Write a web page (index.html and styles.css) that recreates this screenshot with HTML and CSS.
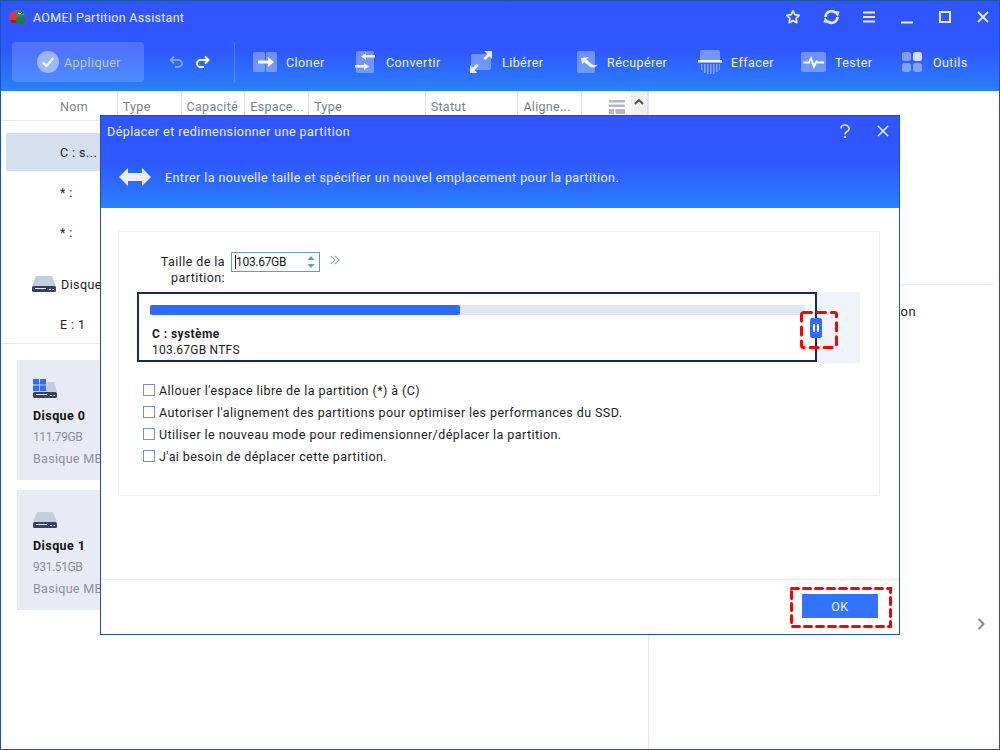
FILE: index.html
```html
<!DOCTYPE html>
<html lang="fr">
<head>
<meta charset="utf-8">
<title>AOMEI Partition Assistant</title>
<link rel="stylesheet" href="styles.css">
</head>
<body>
<div class="app">
  <header class="topbar">
    <div class="titlebar">
      <svg class="logo" width="19" height="16" viewBox="0 0 19 16"><path d="M1 8a8 7.500 0 0 1 8-7l1 6-2 2v3H2z" fill="#d63a3a"/><path d="M8 1a8 7 0 0 1 9 5l-4 2-5-1z" fill="#2f8f5a"/><path d="M8 9h10a8 7 0 0 1-3 6H8z" fill="#1f7a45"/><path d="M2 11h6v3H4z" fill="#8e2233"/><path d="M10 4l2 1 2-2" stroke="#bfe8c8" fill="none"/></svg>
      <span class="apptitle">AOMEI Partition Assistant</span>
      <div class="winctl">
        <svg width="16" height="16" viewBox="0 0 16 16"><path d="M8 1.800l1.900 3.900 4.300.6-3.100 3 .7 4.300L8 11.600l-3.800 2 .7-4.300-3.100-3 4.300-.6z" fill="none" stroke="#e6ecff" stroke-width="1.800" stroke-linejoin="round"/></svg>
        <svg width="17" height="16" viewBox="0 0 17 16"><path d="M2.500 8a6 6 0 0 1 10-4.300M14.500 8a6 6 0 0 1-10 4.300" fill="none" stroke="#e6ecff" stroke-width="2.600"/><path d="M10.500 2l6 .5-1.500 5.500zM6.500 14l-6-.5L2 8z" fill="#e6ecff"/></svg>
        <svg width="14" height="14" viewBox="0 0 14 14"><path d="M1 2.500h12M1 7h12M1 11.500h12" stroke="#e6ecff" stroke-width="2"/></svg>
        <svg class="minicon" width="14" height="14" viewBox="0 0 14 14"><path d="M1 12.500h12" stroke="#e6ecff" stroke-width="2"/></svg>
        <svg width="14" height="14" viewBox="0 0 14 14"><rect x="2" y="2" width="10" height="10" fill="none" stroke="#e6ecff" stroke-width="2"/></svg>
        <svg width="14" height="14" viewBox="0 0 14 14"><path d="M2 2l10 10M12 2L2 12" stroke="#e6ecff" stroke-width="1.800"/></svg>
      </div>
    </div>
    <div class="toolbar">
      <div class="apply">
        <svg width="22" height="22" viewBox="0 0 22 22"><circle cx="11" cy="11" r="11" fill="#fff" opacity=".45"/><path d="M6 11.500l3.500 3.500 7-8" fill="none" stroke="#fff" stroke-width="2.500" opacity=".85"/></svg>
        <span>Appliquer</span>
      </div>
      <div class="history">
        <svg width="16" height="14" viewBox="0 0 16 14"><path d="M5 1.500L1.500 5 5 8.500M2 5h7.500a3.500 3.500 0 0 1 0 7H6" fill="none" stroke="#7fa6ff" stroke-width="1.800"/></svg>
        <svg width="16" height="14" viewBox="0 0 16 14"><path d="M11 1.500L14.500 5 11 8.500M14 5H6.500a3.500 3.500 0 0 0 0 7H10" fill="none" stroke="#fff" stroke-width="2"/></svg>
      </div>
      <div class="sep"></div>
      <div class="tools">
        <div class="tool">
          <svg width="33" height="26" viewBox="0 0 33 26"><rect x="0" y="3" width="12" height="20" rx="1.500" fill="#fff" opacity=".32"/><rect x="13" y="3" width="11" height="20" rx="1.500" fill="#fff" opacity=".32"/><path d="M5 11.500h10V8l6 5-6 5v-3.500H5z" fill="#fff"/></svg>
          <span>Cloner</span>
        </div>
        <div class="tool">
          <svg width="31" height="26" viewBox="0 0 31 26"><rect x="1" y="2" width="18" height="22" rx="2" fill="#fff" opacity=".32"/><path d="M20 6h-9V4l-5 3.500L11 11V8.500h9zM0 16h9v-2l5 3.500L9 21v-2.500H0z" fill="#fff" opacity=".95"/></svg>
          <span>Convertir</span>
        </div>
        <div class="tool">
          <svg width="32" height="26" viewBox="0 0 32 26"><rect x="1" y="5" width="20" height="16" rx="2" fill="#fff" opacity=".32"/><path d="M22 2v8l-2.700-2.700-4 4-2-2 4-4L14.500 2zM0 24v-8l2.700 2.700 4-4 2 2-4 4L7.500 24z" fill="#e6edff"/></svg>
          <span>Libérer</span>
        </div>
        <div class="tool">
          <svg width="30" height="26" viewBox="0 0 30 26"><rect x="0" y="2" width="18" height="22" rx="2" fill="#fff" opacity=".32"/><path d="M4 9l8-1-2.500 2.500 5 4.500c2 1.500 4 1.500 6 .5-1 3-5 4-8 2l-5-4.500L5 15z" fill="#f2f5ff"/></svg>
          <span>Récupérer</span>
        </div>
        <div class="tool">
          <svg width="33" height="26" viewBox="0 0 33 26"><rect x="2" y="1" width="20" height="11" rx="2" fill="#fff" opacity=".35"/><rect x="0" y="11" width="24" height="2.500" fill="#fff"/><path d="M3 15h1.500v6H3zM6 15h1.500v9H6zM9 15h1.500v10H9zM12 15h1.500v10H12zM15 15h1.500v10H15zM18 15h1.500v8H18zM21 15h1v6h-1z" fill="#fff" opacity=".4"/></svg>
          <span>Effacer</span>
        </div>
        <div class="tool">
          <svg width="34" height="26" viewBox="0 0 34 26"><rect x="0" y="3" width="25" height="20" rx="2" fill="#fff" opacity=".32"/><path d="M2.500 13.500H8l2-4 3 8 2.500-5 1.500 1h6" fill="none" stroke="#fff" stroke-width="2"/></svg>
          <span>Tester</span>
        </div>
        <div class="tool">
          <svg width="31" height="26" viewBox="0 0 31 26"><rect x="0" y="3" width="9" height="9" rx="2.500" fill="#fff" opacity=".4"/><rect x="11" y="3" width="9" height="9" rx="2.500" fill="#fff" opacity=".8"/><rect x="0" y="14" width="9" height="9" rx="2.500" fill="#fff" opacity=".4"/><rect x="11" y="14" width="9" height="9" rx="2.500" fill="#fff" opacity=".4"/></svg>
          <span>Outils</span>
        </div>
      </div>
    </div>
  </header>
  <main class="content">
    <section class="leftpane">
      <div class="thead">
        <span class="th th-name">Nom</span>
        <span class="th th-a">Type</span>
        <span class="th th-a">Capacité</span>
        <span class="th th-a">Espace...</span>
        <span class="th th-b">Type</span>
        <span class="th th-c">Statut</span>
        <span class="th th-a">Aligne...</span>
        <span class="th th-icon"><svg width="16" height="14" viewBox="0 0 16 14"><path d="M0 0h16v2.500H0zM0 4.500h16V7H0zM0 9h5v5H0zM6.500 9H16v5H6.500z" fill="#aeb8c9"/></svg></span>
        <span class="th-scroll"><svg width="10" height="7" viewBox="0 0 10 7"><path d="M1 6l4-4 4 4" fill="none" stroke="#555" stroke-width="2"/></svg></span>
      </div>
      <div class="rows">
        <div class="row selected">C : s...</div>
        <div class="row">* :</div>
        <div class="row">* :</div>
        <div class="row diskrow">
          <svg width="24" height="18" viewBox="0 0 24 18"><path d="M4 1h16l4 11H0z" fill="#c3cddd"/><rect x="0" y="11" width="24" height="6" rx="1.500" fill="#39415c"/><path d="M3 13.500h11M17 14.500h2M20.500 14.500h1.500" stroke="#e8ecf4"/></svg>
          <span>Disque</span>
        </div>
        <div class="row">E : 1</div>
      </div>
      <div class="cards">
        <div class="card">
          <svg width="24" height="20" viewBox="0 0 24 20"><path d="M6 3h15l3 10H0z" fill="#c3cddd"/><rect x="0" y="13" width="24" height="6" rx="1.500" fill="#39415c"/><path d="M3 15.500h11M17 16.500h2M20.500 16.500h1.500" stroke="#e8ecf4"/><path d="M0 0h6v5.500H0zM7 0h6v5.500H7zM0 6.500h6V12H0zM7 6.500h6V12H7z" fill="#2f6bff"/></svg>
          <strong>Disque 0</strong>
          <span class="cardsize">111.79GB</span>
          <span>Basique MBR</span>
        </div>
        <div class="card">
          <svg width="24" height="20" viewBox="0 0 24 20"><path d="M4 3h16l4 10H0z" fill="#c3cddd"/><rect x="0" y="13" width="24" height="6" rx="1.500" fill="#39415c"/><path d="M3 15.500h11M17 16.500h2M20.500 16.500h1.500" stroke="#e8ecf4"/></svg>
          <strong>Disque 1</strong>
          <span class="cardsize">931.51GB</span>
          <span>Basique MBR</span>
        </div>
      </div>
    </section>
    <aside class="rightpane">
      <div class="opline"></div>
      <div class="opitem">Partition</div>
      <svg class="chev" width="8" height="12" viewBox="0 0 8 12"><path d="M1.500 1l5 5-5 5" fill="none" stroke="#7d8494" stroke-width="2"/></svg>
    </aside>
  </main>

  <div class="dialog">
    <div class="dlghead">
      <div class="dlgtitle">
        <span>Déplacer et redimensionner une partition</span>
        <svg class="dlgq" width="12" height="14" viewBox="0 0 12 14"><path d="M2 4.500a4 3.500 0 1 1 6 3c-1.500 1-2 1.500-2 3" fill="none" stroke="#e6ecff" stroke-width="1.600"/><path d="M5 12h2v2H5z" fill="#e6ecff"/></svg>
        <svg class="dlgx" width="12" height="12" viewBox="0 0 12 12"><path d="M1 1l10 10M11 1L1 11" stroke="#e6ecff" stroke-width="1.600"/></svg>
      </div>
      <div class="dlgsub">
        <svg width="32" height="18" viewBox="0 0 32 18"><path d="M0 9l9-9v5h14V0l9 9-9 9v-5H9v5z" fill="#eaf0ff"/></svg>
        <span>Entrer la nouvelle taille et spécifier un nouvel emplacement pour la partition.</span>
      </div>
    </div>
    <div class="dlgbody">
      <div class="panel">
        <div class="sizerow">
          <label class="sizelabel">Taille de la partition:</label>
          <div class="sizeinput">
            <span class="caret"></span><span class="sizeval">103.67GB</span>
            <svg width="8" height="14" viewBox="0 0 8 14"><path d="M4 1l3.500 4h-7zM4 13L.5 9h7z" fill="#6f93cf"/></svg>
          </div>
          <svg class="more" width="10" height="10" viewBox="0 0 10 10"><path d="M1 1l4 4-4 4M5 1l4 4-4 4" fill="none" stroke="#8fa4d0" stroke-width="1.100"/></svg>
        </div>
        <div class="slider">
          <div class="partbox">
            <div class="track"><div class="fill"></div></div>
            <div class="pname">C : système</div>
            <div class="pinfo">103.67GB NTFS</div>
            <div class="handle"><i></i><i></i></div>
          </div>
          <div class="freezone"></div>
        </div>
        <ul class="options">
          <li><span class="box"></span>Allouer l'espace libre de la partition (*) à (C)</li>
          <li><span class="box"></span>Autoriser l'alignement des partitions pour optimiser les performances du SSD.</li>
          <li><span class="box"></span>Utiliser le nouveau mode pour redimensionner/déplacer la partition.</li>
          <li><span class="box"></span>J'ai besoin de déplacer cette partition.</li>
        </ul>
      </div>
    </div>
    <div class="dlgfoot"><button class="ok">OK</button></div>
  </div>
  <svg class="mark mark-handle" width="38" height="38" viewBox="0 0 38 38"><rect x="1.500" y="1.500" width="35" height="35" rx="2" fill="none" stroke="#f00" stroke-width="3" stroke-dasharray="8 6" stroke-linecap="round"/></svg>
  <svg class="mark mark-ok" width="102" height="41" viewBox="0 0 102 41"><rect x="1.500" y="1.500" width="99" height="38" fill="none" stroke="#f00" stroke-width="3" stroke-dasharray="7 5" stroke-linecap="round"/></svg>
</div>
</body>
</html>
```
FILE: styles.css
```css
* { box-sizing: border-box; }
html, body { margin: 0; padding: 0; }
body { width: 1000px; height: 750px; overflow: hidden; background: #fff; font-family: Roboto, "Liberation Sans", sans-serif; font-size: 12.500px; letter-spacing: .43px; color: #1c1c24; }
.app { position: relative; width: 1000px; height: 750px; border: 1px solid #1a55a8; overflow: hidden; display: flex; flex-direction: column; }

.topbar { height: 90px; flex: none; background: linear-gradient(180deg, #2f55ff 0%, #2f58ff 55%, #2a80ff 100%); color: #eef2ff; }
.titlebar { height: 32px; display: flex; align-items: center; padding-left: 7px; }
.logo { margin-right: 6px; }
.apptitle { letter-spacing: .28px; }
.winctl { margin-left: auto; margin-right: -3px; display: grid; grid-auto-flow: column; grid-auto-columns: 38px; justify-items: center; align-items: center; }
.toolbar { display: flex; align-items: center; height: 40px; margin-top: 9px; padding-left: 11px; }
.apply { width: 132px; height: 40px; background: rgba(255,255,255,.16); border-radius: 4px; display: flex; align-items: center; padding-left: 25px; gap: 5px; color: #b9cdff; }
.history { display: flex; gap: 9px; margin-left: 25px; width: 65px; }
.sep { width: 1px; height: 40px; background: rgba(255,255,255,.2); }
.tools { display: grid; grid-template-columns: 102px 115px 107px 121px 103px 101px 80px; margin-left: 18px; }
.tool { display: flex; align-items: center; color: #eef2ff; }

.content { flex: 1; display: flex; min-height: 0; }
.leftpane { width: 648px; flex: none; border-right: 1px solid #e6e9f0; }
.thead { height: 30px; display: flex; align-items: stretch; border-bottom: 1px solid #e3e8f2; color: #7a7f8c; letter-spacing: .3px; }
.th { display: flex; align-items: center; padding: 2px 0 0 5px; border-right: 1px solid #dfe4ee; }
.th-name { width: 117px; padding-left: 59px; }
.th-a { width: 64px; }
.th-b { width: 117px; }
.th-c { width: 93px; }
.th-icon { width: 49px; border-right: 0; padding-left: 27px; }
.th-scroll { width: 17px; background: #f0f0f0; display: flex; justify-content: center; padding-top: 7px; border-right: 1px solid #dfe4ee; }
.rows { height: 223px; padding: 12px 0 0 5px; border-bottom: 1px solid #e3e8f2; }
.row { height: 40px; display: flex; align-items: center; padding-left: 54px; }
.selected { height: 38px; margin-bottom: 1px; background: #d5dfee; }
.diskrow { margin-top: 12px; padding-left: 26px; gap: 5px; }
.cards { padding: 16px 0 0 16px; display: flex; flex-direction: column; gap: 10px; }
.card { width: 130px; height: 120px; background: #e8ebf3; padding: 19px 0 0 16px; display: flex; flex-direction: column; color: #8d909c; white-space: nowrap; letter-spacing: .3px; }
.card strong { color: #111; margin-top: 6px; line-height: 22px; letter-spacing: .43px; }
.card span { line-height: 21px; }
.card .cardsize { font-size: 12px; letter-spacing: -.4px; }

.rightpane { flex: 1; position: relative; }
.opline { height: 1px; background: #e3e8f2; margin: 193px 5px 0 0; }
.opitem { margin-top: 19px; width: 267px; text-align: right; line-height: 16px; font-size: 13px; }
.chev { position: absolute; left: 328px; top: 527px; }

.dialog { position: absolute; left: 99px; top: 114px; width: 800px; height: 520px; background: #fff; border: 1px solid #1a55a8; display: flex; flex-direction: column; }
.dlghead { height: 92px; flex: none; background: linear-gradient(180deg, #2f55ff 0%, #2f58ff 50%, #2a80ff 100%); color: #eef2ff; }
.dlgtitle { height: 30px; display: flex; align-items: center; padding-left: 6px; padding-right: 10px; }
.dlgq { margin-left: auto; margin-right: 26px; }
.dlgsub { display: flex; align-items: center; height: 36px; margin-top: 13px; padding-left: 18px; gap: 14px; }
.dlgbody { flex: 1; padding: 23px 19px 0 17px; border-bottom: 1px solid #e9ebf2; }
.panel { height: 265px; border: 1px solid #eef0f6; padding: 20px 0 0 18px; }
.sizerow { display: flex; height: 40px; align-items: flex-start; }
.sizelabel { width: 88px; text-align: right; line-height: 16px; padding-top: 2px; }
.sizeinput { width: 89px; height: 20px; margin-left: 6px; border: 1px solid #6f93cf; display: flex; align-items: center; padding-left: 3px; padding-right: 4px; }
.sizeinput svg { margin-left: auto; }
.sizeval { font-size: 12px; letter-spacing: -.3px; margin-left: 1px; }
.caret { width: 1px; height: 14px; background: #111; margin-right: -1px; }
.more { margin: 3px 0 0 10px; }
.slider { display: flex; height: 71px; }
.partbox { position: relative; width: 680px; height: 70px; border: 2px solid #14286b; padding: 11px 0 0 13px; }
.track { width: 655px; height: 10px; margin-left: -2px; background: #e0e6f1; border-radius: 2px; }
.fill { width: 310px; height: 10px; background: #2f6bff; border-radius: 2px; }
.pname { font-weight: 700; font-size: 12px; line-height: 16px; margin-top: 11px; }
.pinfo { font-size: 12px; line-height: 16px; letter-spacing: .23px; }
.handle { position: absolute; left: 671px; top: 24px; width: 12px; height: 20px; background: #2f6bff; border-radius: 2px; display: flex; justify-content: center; align-items: center; gap: 2px; }
.handle i { width: 2px; height: 8px; background: #fff; }
.freezone { width: 43px; background: #f0f3fa; }
.options { list-style: none; margin: 16px 0 0 6px; padding: 0; }
.options li { height: 22px; display: flex; align-items: center; gap: 4px; }
.box { width: 12px; height: 12px; border: 1px solid #6c93d8; flex: none; }
.dlgfoot { height: 54px; flex: none; display: flex; justify-content: flex-end; padding: 14px 21px 0 0; }
.ok { width: 76px; height: 24px; background: #3473ff; border: 0; color: #eef2ff; font: inherit; letter-spacing: .43px; }

.mark { position: absolute; }
.mark-handle { left: 799px; top: 310px; }
.mark-ok { left: 789px; top: 586px; }
```
